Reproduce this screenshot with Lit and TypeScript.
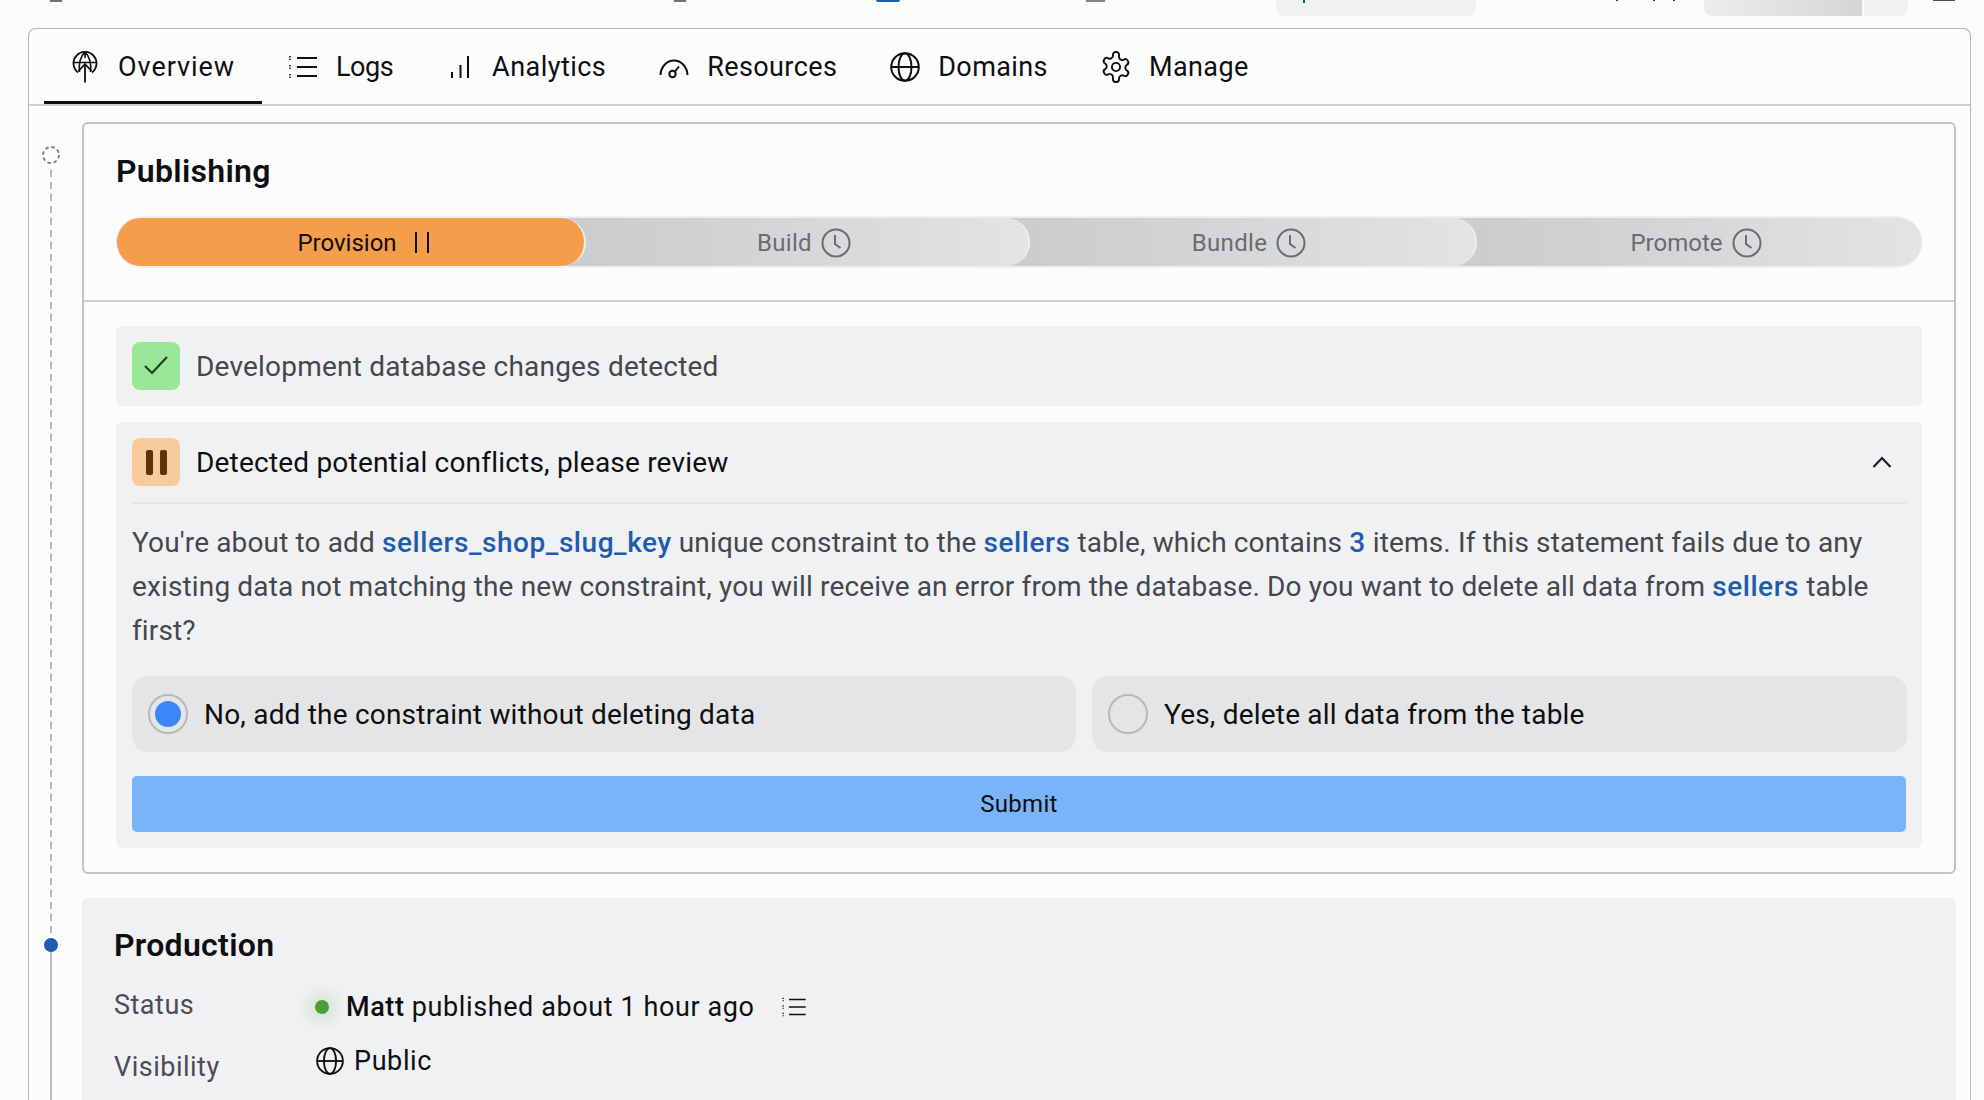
import { LitElement, html, css, svg } from 'lit';
import { customElement } from 'lit/decorators.js';

const icon = (w: number, h: number, vb: string, body: unknown) => html`
  <svg width=${w} height=${h} viewBox=${vb} fill="none" stroke="currentColor" stroke-width="2">${body}</svg>
`;

const overviewIcon = icon(30, 32, '0 0 30 32', svg`
  <path d="M8 21.5A11.5 11.5 0 1 1 22 21.5" stroke-width="1.8"/>
  <path d="M15 1v6M9.5 21C8.4 13 10.5 5 15 1.2C19.5 5 21.6 13 20.5 21M3.6 11.5h22.8" stroke-width="1.6"/>
  <path d="M15 31.5V13M8.5 20l6.5-7 6.5 7" stroke-width="1.8"/>
`);
const listIcon = (w: number, h: number) => icon(w, h, '0 0 30 24', svg`
  <path d="M9 3h20M9 12h20M9 21h20"/>
  <path d="M2 1v4M2 10v4M2 19v4" stroke-width="1.6" stroke-dasharray="1.4 1.4"/>
`);
const analyticsIcon = icon(30, 32, '0 0 30 32', svg`
  <path d="M8 27v-6M16.500 27V14M24 27V5"/>
`);
const gaugeIcon = icon(30, 32, '0 0 30 32', svg`
  <path d="M1.500 24C2 15.500 8 9.500 15 9.500S28 15.500 28.500 24"/>
  <circle cx="13.500" cy="23" r="3.200"/>
  <path d="M16 20.500l4-5"/>
`);
const globeIcon = (s: number) => icon(s, s, '0 0 30 30', svg`
  <circle cx="15" cy="15" r="13.800"/>
  <ellipse cx="15" cy="15" rx="6.500" ry="13.800"/>
  <path d="M1.200 15h27.600"/>
`);
const gearIcon = icon(30, 32, '1 0.5 22 23', svg`
  <g stroke-width="1.400">
    <path d="M12.220 1h-.44a2 2 0 0 0-2 2v.68a2 2 0 0 1-1 1.730l-.43.250a2 2 0 0 1-2 0l-.15-.08a2 2 0 0 0-2.730.730l-.22.380a2 2 0 0 0 .730 2.730l.15.100a2 2 0 0 1 1 1.720v.510a2 2 0 0 1-1 1.740l-.15.090a2 2 0 0 0-.730 2.730l.22.380a2 2 0 0 0 2.730.730l.15-.08a2 2 0 0 1 2 0l.43.250a2 2 0 0 1 1 1.730V21a2 2 0 0 0 2 2h.44a2 2 0 0 0 2-2v-.68a2 2 0 0 1 1-1.730l.43-.250a2 2 0 0 1 2 0l.15.080a2 2 0 0 0 2.730-.730l.22-.390a2 2 0 0 0-.730-2.730l-.15-.08a2 2 0 0 1-1-1.740v-.5a2 2 0 0 1 1-1.740l.15-.090a2 2 0 0 0 .730-2.730l-.22-.380a2 2 0 0 0-2.730-.730l-.15.080a2 2 0 0 1-2 0l-.43-.250a2 2 0 0 1-1-1.730V3a2 2 0 0 0-2-2z"/>
    <circle cx="12" cy="12" r="3"/>
  </g>
`);
const clockIcon = icon(30, 30, '0 0 30 30', svg`
  <circle cx="15" cy="15" r="13.500"/>
  <path d="M14 7v9l5.500 4"/>
`);

const tabs = [
  { label: 'Overview', icon: overviewIcon, active: true },
  { label: 'Logs', icon: listIcon(30, 24) },
  { label: 'Analytics', icon: analyticsIcon },
  { label: 'Resources', icon: gaugeIcon },
  { label: 'Domains', icon: globeIcon(30) },
  { label: 'Manage', icon: gearIcon },
];

const steps = ['Build', 'Bundle', 'Promote'];

@customElement('app-root')
export class AppRoot extends LitElement {
  static styles = css`
    :host {
      display: block;
      height: 1100px;
      overflow: hidden;
      background: #fcfcfc;
      color: #0e0f11;
      font-family: Roboto, "Noto Sans", sans-serif;
    }
    svg {
      display: block;
      flex: none;
    }
    .topbar {
      display: flex;
      align-items: flex-start;
      height: 28px;
    }
    .sliver {
      height: 2px;
    }
    .s1 { margin-left: 50px; width: 12px; background: #6f7074; }
    .s2 { margin-left: 612px; width: 12px; background: #6f7074; }
    .s3 { margin-left: 190px; width: 24px; background: #1f5bb0; border-radius: 0 0 12px 12px; }
    .s4 { margin-left: 186px; width: 19px; background: #85868a; }
    .pale {
      margin-left: 171px;
      width: 200px;
      height: 16px;
      padding-left: 27px;
      box-sizing: border-box;
      background: #f0f1f3;
      border-radius: 0 0 8px 8px;
    }
    .tick {
      width: 2px;
      height: 3px;
      background: #1f6a1f;
    }
    .speck {
      width: 2px;
      height: 1px;
      background: #333;
    }
    .s5 { margin-left: 140px; }
    .s6 { margin-left: 35px; }
    .s7 { margin-left: 18px; }
    .grad {
      margin-left: 29px;
      width: 158px;
      height: 16px;
      background: linear-gradient(90deg, #eceded, #d4d5d7);
      border-radius: 0 0 0 8px;
    }
    .pale2 {
      margin-left: 2px;
      width: 44px;
      height: 16px;
      background: #f0f1f3;
      border-radius: 0 0 8px 0;
    }
    .s8 {
      margin-left: 25px;
      width: 22px;
      height: 1px;
      background: #555;
    }

    .shell {
      width: 1943px;
      height: 1072px;
      margin-left: 28px;
      box-sizing: border-box;
      border: 1px solid #b4b4b4;
      border-bottom: none;
      border-radius: 8px 8px 0 0;
    }
    .tabs {
      display: flex;
      height: 75px;
      padding-left: 15px;
      border-bottom: 2px solid #d1d1d1;
    }
    .tab {
      display: flex;
      align-items: center;
      gap: 18px;
      padding: 0 27px 0 26px;
      box-sizing: border-box;
      border-top: 3px solid transparent;
      border-bottom: 3px solid transparent;
      font-size: 27px;
      letter-spacing: 0.4px;
    }
    .tab.active {
      border-bottom-color: #0e0f11;
      letter-spacing: 0.95px;
    }
    .tab.t-logs {
      padding-right: 25px;
      letter-spacing: -0.5px;
    }
    .tab.t-analytics {
      letter-spacing: 0.45px;
    }

    .main {
      display: flex;
    }
    .rail {
      display: flex;
      flex-direction: column;
      align-items: center;
      width: 44px;
      margin-right: 9px;
      flex: none;
      padding-top: 40px;
      box-sizing: border-box;
    }
    .dash {
      width: 2px;
      height: 768px;
      margin-top: 6px;
      background: repeating-linear-gradient(#b9b9b9 0 7px, transparent 7px 12px);
    }
    .node {
      width: 14px;
      height: 14px;
      background: #1f5bb0;
      border-radius: 50%;
    }
    .solid {
      flex: 1;
      border-left: 2px solid #bdbdbd;
    }
    .content {
      width: 1874px;
      padding-top: 16px;
    }
    h2 {
      margin: 0;
      font-size: 32px;
      font-weight: 600;
      line-height: 40px;
      letter-spacing: 0.3px;
    }

    .publishing {
      border: 2px solid #c4c4c4;
      border-radius: 6px;
    }
    .pub-head {
      padding: 27px 32px 32px;
      border-bottom: 2px solid #cfcfcf;
    }
    .stepper {
      display: flex;
      height: 52px;
      margin-top: 25px;
      padding: 2px 0;
      box-sizing: border-box;
      background: #eeeff0;
      border-radius: 26px;
      overflow: hidden;
    }
    .step {
      position: relative;
      display: flex;
      align-items: center;
      justify-content: center;
      gap: 9px;
      margin-left: -40px;
      padding: 1px 0 0 34px;
      flex: none;
      box-sizing: border-box;
      background: linear-gradient(90deg, #cccdcf 10%, #d1d2d4 35%, #e3e4e6 100%);
      border-right: 2px solid #eeeff0;
      border-radius: 0 24px 24px 0;
      color: #6b6c70;
      font-size: 24px;
      letter-spacing: 0.3px;
    }
    .step.s-build { width: 484px; z-index: 3; }
    .step.s-bundle { width: 487px; z-index: 2; padding-left: 33px; }
    .step.s-promote { width: 485px; z-index: 1; padding-left: 33px; border-right: none; letter-spacing: 0; }
    .step.current {
      width: 470px;
      margin-left: 0;
      padding: 1px 0 0 25px;
      gap: 18px;
      background: #f49d4b;
      border: 2px solid #eeeff0;
      border-width: 0 2px 0 1px;
      color: #0e0f11;
      border-radius: 24px;
      letter-spacing: 0;
      z-index: 4;
    }
    .bars {
      display: flex;
      gap: 10px;
    }
    .bars span {
      width: 2px;
      height: 21px;
      background: #0e0f11;
    }

    .pub-body {
      display: flex;
      flex-direction: column;
      gap: 16px;
      padding: 24px 32px;
    }
    .panel {
      padding: 16px;
      background: #f0f1f3;
      border-radius: 6px;
    }
    .panel-head {
      display: flex;
      align-items: center;
      gap: 16px;
      font-size: 28px;
      letter-spacing: 0.2px;
    }
    .muted {
      color: #44474e;
    }
    .badge {
      display: flex;
      align-items: center;
      justify-content: center;
      gap: 7px;
      width: 48px;
      height: 48px;
      flex: none;
      border-radius: 8px;
      color: #1f3f1e;
    }
    .badge.ok {
      background: #9ae897;
    }
    .badge.wait {
      background: #f8cb9c;
    }
    .badge.wait span {
      width: 7px;
      height: 25px;
      background: #5e330c;
      border-radius: 2px;
    }
    .chevron {
      margin-left: auto;
      margin-right: 14px;
      color: #1c1d20;
    }
    .rule {
      height: 2px;
      margin: 16px 0 17px;
      background: #e4e5e7;
    }
    .copy {
      font-size: 28px;
      line-height: 44px;
      letter-spacing: 0.14px;
      color: #44474e;
    }
    .copy b {
      font-weight: 500;
      letter-spacing: 0.55px;
      color: #1f5bb0;
    }
    .options {
      display: grid;
      grid-template-columns: 944px 815px;
      gap: 16px;
      margin-top: 23px;
    }
    .option {
      display: flex;
      align-items: center;
      gap: 16px;
      height: 76px;
      padding: 0 16px;
      box-sizing: border-box;
      background: #e4e5e7;
      border-radius: 16px;
      font-size: 28px;
      letter-spacing: 0.2px;
    }
    .radio {
      display: flex;
      align-items: center;
      justify-content: center;
      width: 40px;
      height: 40px;
      flex: none;
      box-sizing: border-box;
      border: 2px solid #b9b9bb;
      border-radius: 50%;
    }
    .radio span {
      width: 26px;
      height: 26px;
      background: #3b87f7;
      border-radius: 50%;
    }
    .submit {
      display: block;
      width: 100%;
      height: 56px;
      margin-top: 24px;
      padding: 0;
      background: #79b3f8;
      border: none;
      border-radius: 5px;
      color: #0e0f11;
      font: inherit;
      font-size: 24px;
      letter-spacing: 0.3px;
    }

    .production {
      height: 300px;
      margin-top: 24px;
      padding: 27px 32px;
      background: #f0f1f3;
      border-radius: 6px;
    }
    .facts {
      display: grid;
      grid-template-columns: 201px 1fr;
      margin-top: 22px;
      font-size: 27px;
      letter-spacing: 0.5px;
    }
    .label {
      margin-top: 2px;
      color: #4a4d55;
    }
    .label.second {
      margin-top: 24px;
    }
    .value {
      display: flex;
      align-items: center;
      height: 40px;
      letter-spacing: 0.6px;
    }
    .value.second {
      height: 36px;
      margin-top: 16px;
      margin-left: 1px;
      gap: 10px;
    }
    .dot {
      width: 14px;
      height: 14px;
      margin-right: 17px;
      background: #4a9f3a;
      border-radius: 50%;
      box-shadow: 0 0 14px 8px rgba(74, 159, 58, 0.14);
    }
    .value strong {
      font-weight: 500;
      white-space: pre;
    }
    .log-link {
      margin-left: 25px;
    }
  `;

  render() {
    return html`
      <div class="topbar">
        <div class="sliver s1"></div>
        <div class="sliver s2"></div>
        <div class="sliver s3"></div>
        <div class="sliver s4"></div>
        <div class="pale"><div class="tick"></div></div>
        <div class="speck s5"></div>
        <div class="speck s6"></div>
        <div class="speck s7"></div>
        <div class="grad"></div>
        <div class="pale2"></div>
        <div class="s8"></div>
      </div>
      <div class="shell">
        <nav class="tabs">
          ${tabs.map(
            (t) => html`<div class="tab t-${t.label.toLowerCase()} ${t.active ? 'active' : ''}">
              ${t.icon}<span>${t.label}</span>
            </div>`
          )}
        </nav>
        <div class="main">
          <div class="rail">
            <svg width="18" height="18" viewBox="0 0 18 18" fill="none" stroke="#7c7c7c" stroke-width="1.800">
              <circle cx="9" cy="9" r="8" stroke-dasharray="3.500 2.800" />
            </svg>
            <div class="dash"></div>
            <div class="node"></div>
            <div class="solid"></div>
          </div>
          <div class="content">
            <section class="publishing">
              <div class="pub-head">
                <h2>Publishing</h2>
                <div class="stepper">
                  <div class="step current">
                    <span>Provision</span>
                    <div class="bars"><span></span><span></span></div>
                  </div>
                  ${steps.map(
                    (s) => html`<div class="step s-${s.toLowerCase()}"><span>${s}</span>${clockIcon}</div>`
                  )}
                </div>
              </div>
              <div class="pub-body">
                <div class="panel">
                  <div class="panel-head muted">
                    <div class="badge ok">
                      <svg width="26" height="22" viewBox="0 0 26 22" fill="none" stroke="currentColor" stroke-width="2.200">
                        <path d="M2 11l7 7L24 2" />
                      </svg>
                    </div>
                    <span>Development database changes detected</span>
                  </div>
                </div>
                <div class="panel">
                  <div class="panel-head">
                    <div class="badge wait"><span></span><span></span></div>
                    <span>Detected potential conflicts, please review</span>
                    <svg class="chevron" width="20" height="12" viewBox="0 0 20 12" fill="none" stroke="currentColor" stroke-width="2.200">
                      <path d="M1.500 11L10 2l8.500 9" />
                    </svg>
                  </div>
                  <div class="rule"></div>
                  <div class="copy">
                    <div>You're about to add <b>sellers_shop_slug_key</b> unique constraint to the <b>sellers</b> table, which contains <b>3</b> items. If this statement fails due to any</div>
                    <div>existing data not matching the new constraint, you will receive an error from the database. Do you want to delete all data from <b>sellers</b> table</div>
                    <div>first?</div>
                  </div>
                  <div class="options">
                    <div class="option">
                      <div class="radio"><span></span></div>
                      <span>No, add the constraint without deleting data</span>
                    </div>
                    <div class="option">
                      <div class="radio"></div>
                      <span>Yes, delete all data from the table</span>
                    </div>
                  </div>
                  <button class="submit">Submit</button>
                </div>
              </div>
            </section>
            <section class="production">
              <h2>Production</h2>
              <div class="facts">
                <div class="label">Status</div>
                <div class="value">
                  <div class="dot"></div>
                  <strong>Matt </strong><span>published about 1 hour ago</span>
                  <div class="log-link">${listIcon(28, 20)}</div>
                </div>
                <div class="label second">Visibility</div>
                <div class="value second">${globeIcon(28)}<span>Public</span></div>
              </div>
            </section>
          </div>
        </div>
      </div>
    `;
  }
}
